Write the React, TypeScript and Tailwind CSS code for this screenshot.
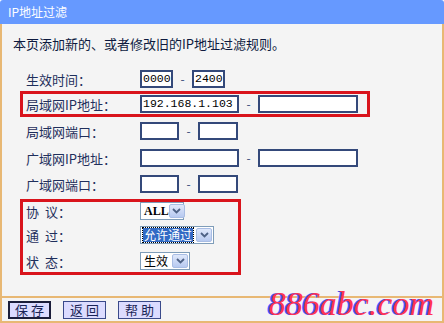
import React from "react";

const cjk = "font-['Noto_Sans_CJK_SC','Noto_Sans',sans-serif]";
const mono = "font-['Liberation_Mono',monospace]";

function TextBox({ width, value }: { width: string; value?: string }) {
  return (
    <div
      className={`${width} h-[18px] bg-white border-2 border-[#34497a] flex items-center pl-[1px] overflow-hidden whitespace-nowrap text-[11.5px] leading-none text-black ${mono}`}
    >
      {value}
    </div>
  );
}

function Dash() {
  return <span className="w-[19px] text-center text-[12px] text-[#34497a]">-</span>;
}

function Arrow() {
  return (
    <div className="w-[16px] h-[14px] mr-[1px] rounded-[2px] border border-[#a9bde4] bg-[linear-gradient(#dfe8fb,#b7c9f0)] flex items-center justify-center shrink-0">
      <svg width="9" height="6" viewBox="0 0 9 6">
        <path d="M1 1 L4.5 4.5 L8 1" fill="none" stroke="#4d6185" strokeWidth="1.8" />
      </svg>
    </div>
  );
}

function Select({ width, label, active, latin }: { width: string; label: string; active?: boolean; latin?: boolean }) {
  return (
    <div
      className={`${width} h-[18px] bg-white border border-[#7f9db9] flex items-center justify-between pl-[2px] whitespace-nowrap text-[12px] leading-none`}
    >
      {active ? (
        <span className="bg-[#316ac5] text-white px-[1px] py-[1px] outline outline-1 outline-dotted outline-[#000]">
          {label}
        </span>
      ) : (
        <span
          className={`text-black pl-[1px] ${latin ? "font-['Liberation_Serif',serif] font-bold" : ""}`}
        >
          {label}
        </span>
      )}
      <Arrow />
    </div>
  );
}

function Label({ text, spaced }: { text: string; spaced?: boolean }) {
  if (spaced) {
    return (
      <div className="w-[114px] text-[13px] text-[#1f2f5c] leading-none whitespace-nowrap">
        <span className="mr-[6px]">{text[0]}</span>
        {text.slice(1)}
      </div>
    );
  }
  return <div className="w-[114px] text-[13px] text-[#1f2f5c] leading-none whitespace-nowrap">{text}</div>;
}

function Button({ text, focus }: { text: string; focus?: boolean }) {
  return (
    <div
      className={`w-[43px] h-[18px] bg-[#dcdcff] flex items-center justify-center text-[13px] leading-none text-[#1a2456] ${
        focus ? "border-2 border-[#1b1e3a]" : "border border-[#3a4a8a]"
      }`}
    >
      {text}
    </div>
  );
}

export default function App() {
  return (
    <div className={`relative w-[444px] h-[323px] bg-white ${cjk} overflow-hidden`}>
      {/* title bar */}
      <div className="h-[24px] bg-[#6699ff] rounded-t-[3px] flex items-center pl-[8px] text-[12px] text-white leading-none">
        IP地址过滤
      </div>

      <div className="h-[299px] bg-[#f4f4f4] border-x-2 border-b-2 border-[#e8b874] flex flex-col">
        {/* description */}
        <div className="h-[43px] pt-[13px] pl-[11px] text-[13px] leading-[14px] text-[#0d1a3e]">
          本页添加新的、或者修改旧的IP地址过滤规则。
        </div>

        {/* time */}
        <div className="h-[24px] pl-[24px] flex items-center">
          <Label text="生效时间：" />
          <TextBox width="w-[33px]" value="0000" />
          <Dash />
          <TextBox width="w-[33px]" value="2400" />
        </div>

        {/* lan ip, highlighted */}
        <div className="ml-[18px] w-[350px] h-[26px] border-[3px] border-[#d9141c] pl-[3px] flex items-center">
          <Label text="局域网IP地址：" />
          <TextBox width="w-[99px]" value="192.168.1.103" />
          <Dash />
          <TextBox width="w-[100px]" />
        </div>

        <div className="h-[28px] pl-[24px] flex items-center">
          <Label text="局域网端口：" />
          <TextBox width="w-[39px]" />
          <Dash />
          <TextBox width="w-[40px]" />
        </div>

        <div className="h-[26px] pl-[24px] flex items-center">
          <Label text="广域网IP地址：" />
          <TextBox width="w-[99px]" />
          <Dash />
          <TextBox width="w-[100px]" />
        </div>

        <div className="h-[26px] pl-[24px] flex items-center">
          <Label text="广域网端口：" />
          <TextBox width="w-[39px]" />
          <Dash />
          <TextBox width="w-[40px]" />
        </div>

        {/* protocol / action / status, highlighted */}
        <div className="mt-[2px] ml-[18px] w-[221px] border-[3px] border-[#d9141c] pl-[3px] flex flex-col">
          <div className="h-[18px] flex items-center">
            <Label text="协议：" spaced />
            <Select width="w-[44px]" label="ALL" latin />
          </div>
          <div className="h-[30px] flex items-center">
            <Label text="通过：" spaced />
            <Select width="w-[74px]" label="允许通过" active />
          </div>
          <div className="h-[22px] flex items-center">
            <Label text="状态：" spaced />
            <Select width="w-[50px]" label="生效" />
          </div>
        </div>

        {/* footer */}
        <div className="mt-[21px] border-t-2 border-[#e8b874] flex-1 flex items-center gap-[12px] pl-[6px]">
          <Button text="保 存" focus />
          <Button text="返 回" />
          <Button text="帮 助" />
        </div>
      </div>

      {/* watermark */}
      <div className="absolute right-[10px] bottom-[2px] font-['Liberation_Serif',serif] italic text-[34px] leading-none text-[#ff3355] [text-shadow:-2px_0_0_#4455ff]">
        886abc.com
      </div>
    </div>
  );
}
